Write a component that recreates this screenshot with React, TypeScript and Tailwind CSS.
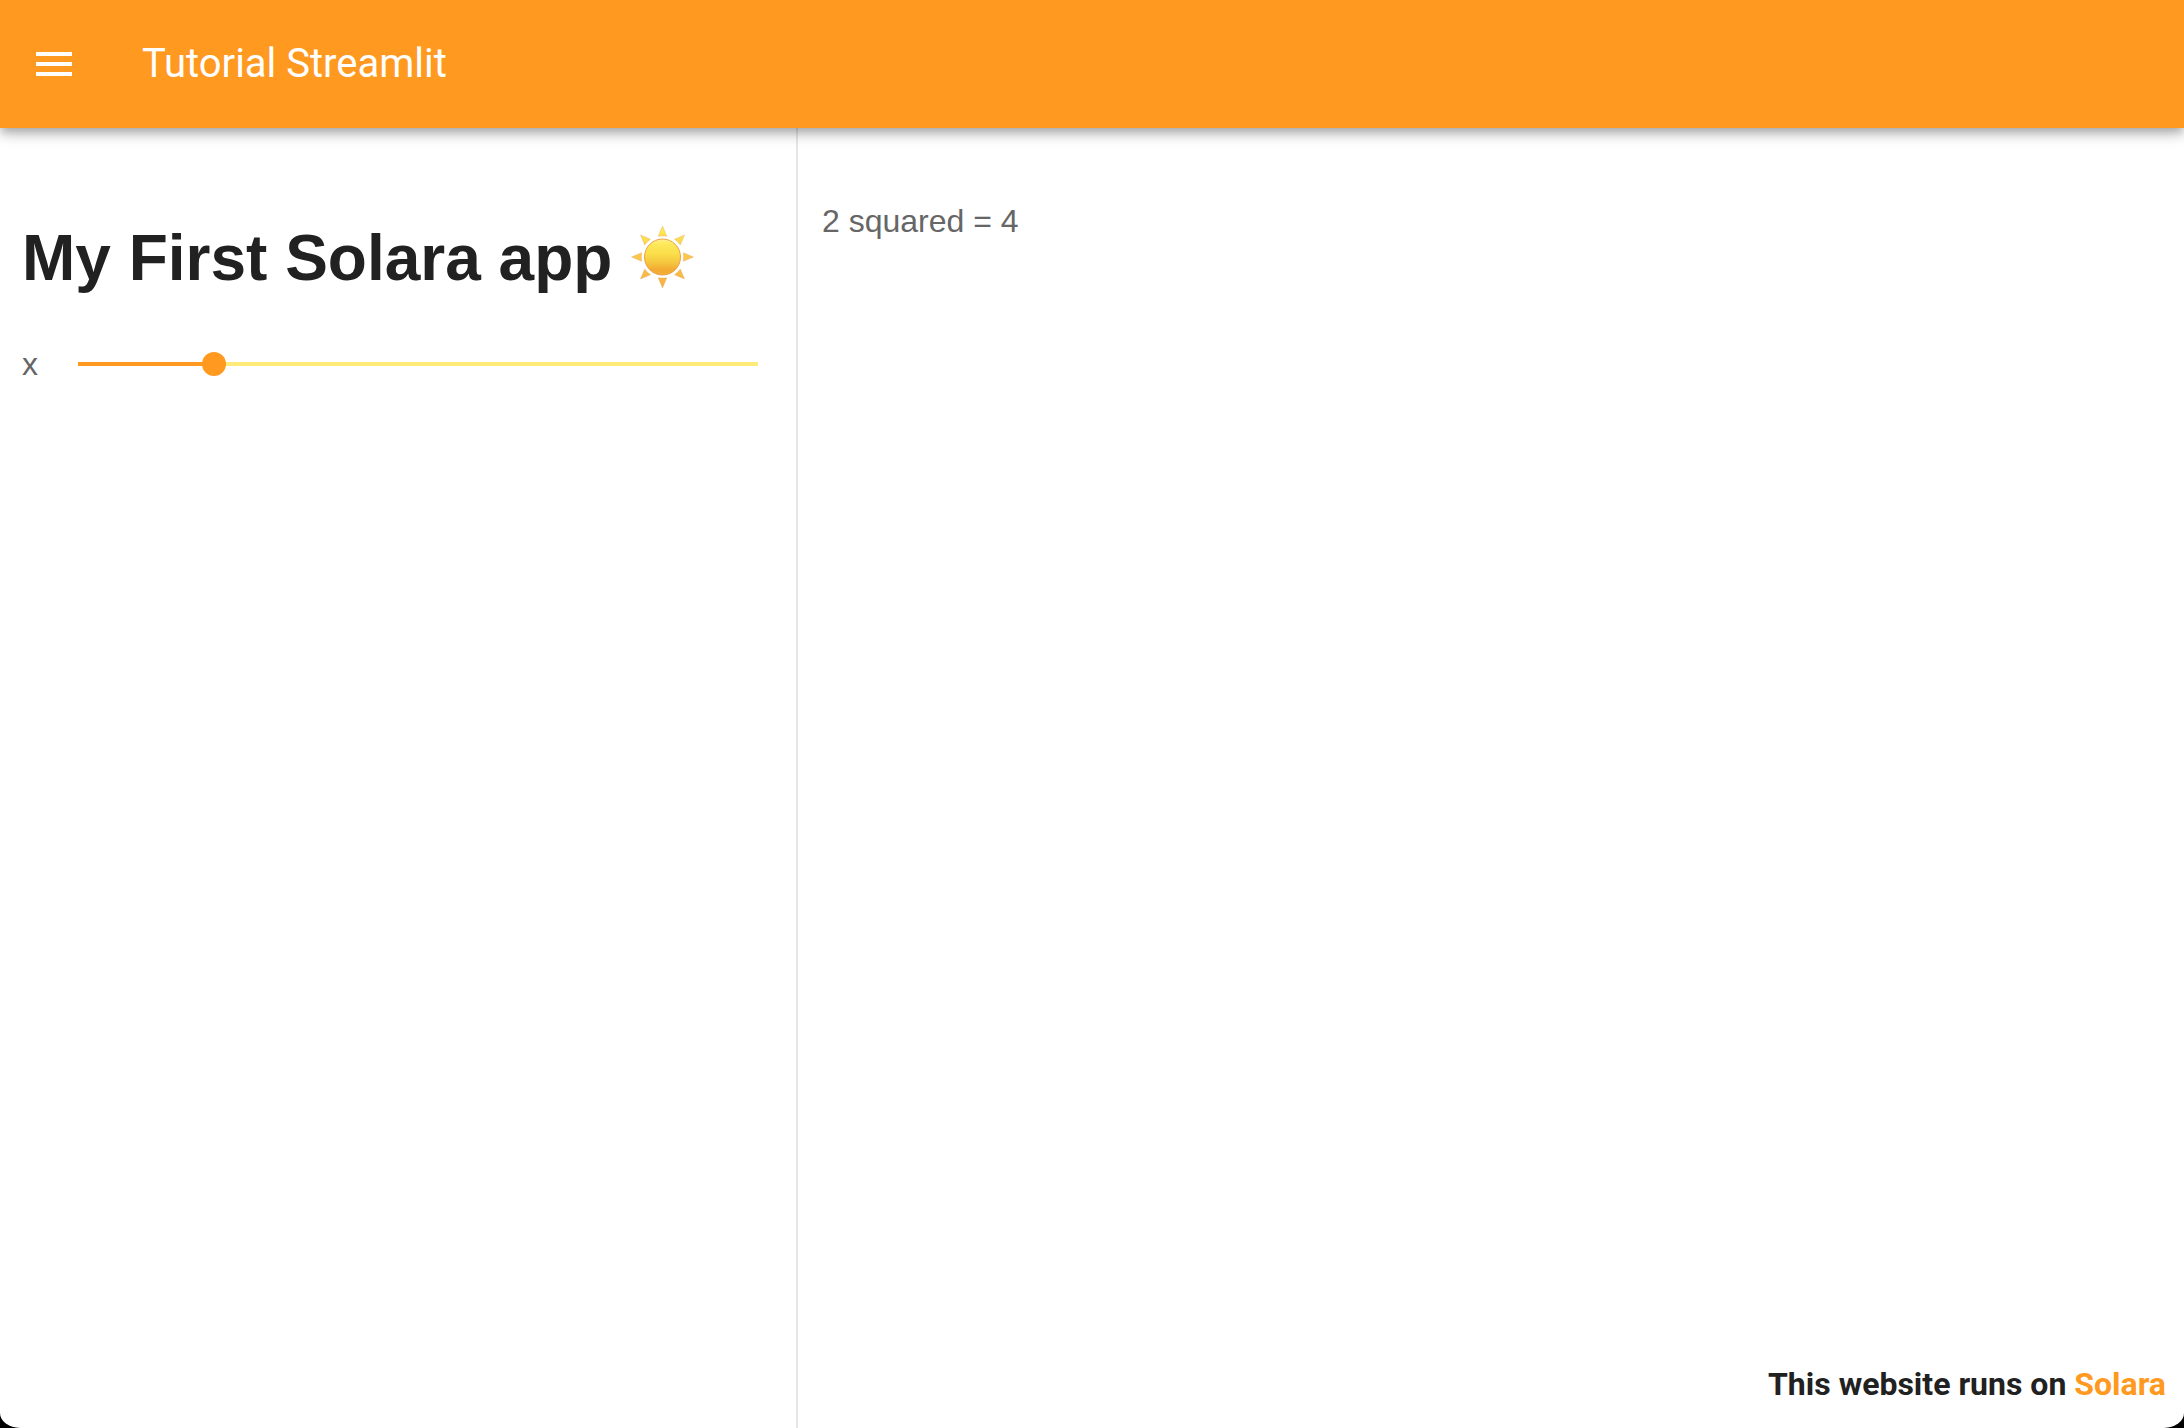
import { useState } from "react";
import type { CSSProperties } from "react";

function MenuIcon() {
  return (
    <svg viewBox="0 0 24 24" className="size-12" fill="currentColor" aria-hidden="true">
      <path d="M3,6H21V8H3V6M3,11H21V13H3V11M3,16H21V18H3V16Z" />
    </svg>
  );
}

function SunIcon() {
  return (
    <svg viewBox="-0.5 1 64 64" className="size-16 overflow-visible" role="img" aria-label="sun">
      <defs>
        <linearGradient id="disc" x1="0" y1="0" x2="0" y2="1">
          <stop offset="0" stopColor="#fff08c" />
          <stop offset="0.15" stopColor="#fde85a" />
          <stop offset="0.4" stopColor="#fbdf4b" />
          <stop offset="0.65" stopColor="#f5c73f" />
          <stop offset="0.85" stopColor="#f2aa31" />
          <stop offset="1" stopColor="#f4ae36" />
        </linearGradient>
        <linearGradient id="rays" gradientUnits="userSpaceOnUse" x1="0" y1="0" x2="0" y2="64">
          <stop offset="0" stopColor="#fff04e" />
          <stop offset="0.5" stopColor="#fbc748" />
          <stop offset="1" stopColor="#f9b03c" />
        </linearGradient>
      </defs>
      <g fill="url(#rays)" stroke="#e2a06a" strokeOpacity="0.6" strokeWidth="0.6" strokeLinejoin="round">
        <path d="M32 1L36.300 11.200Q32 10.600 27.700 11.200Z" />
        <path d="M32 63L36.300 52.800Q32 53.400 27.700 52.800Z" />
        <path d="M1 32L11.200 27.700Q10.600 32 11.200 36.300Z" />
        <path d="M63 32L52.800 27.700Q53.400 32 52.800 36.300Z" />
        <path d="M10 10L20 14.200Q16.600 16.600 14.200 20Z" />
        <path d="M54 10L44 14.200Q47.400 16.600 49.800 20Z" />
        <path d="M10 54L20 49.800Q16.600 47.400 14.200 44Z" />
        <path d="M54 54L44 49.800Q47.400 47.400 49.800 44Z" />
      </g>
      <circle cx="32" cy="32" r="18" fill="url(#disc)" stroke="#e9a348" strokeWidth="1" />
    </svg>
  );
}

export default function App() {
  const [x, setX] = useState(2);

  return (
    <div className="min-h-screen bg-black font-['Liberation_Sans',Arial,sans-serif]">
      <div className="flex min-h-screen flex-col overflow-hidden bg-white [border-radius:0_0_20px_20px/0_0_15px_15px]">
        <header className="relative z-10 flex h-32 shrink-0 items-center gap-16 bg-[#ff9920] px-[30px] text-white shadow-[0_4px_8px_-2px_rgba(0,0,0,0.2),0_8px_10px_0_rgba(0,0,0,0.14),0_2px_20px_0_rgba(0,0,0,0.12)]">
          <button type="button" aria-label="Open menu">
            <MenuIcon />
          </button>
          <div className="font-['Roboto',sans-serif] text-[40px] leading-[60px]">Tutorial Streamlit</div>
        </header>

        <div className="flex grow">
          <aside className="w-[36.54%] shrink-0 border-r-2 border-[#e6e6e6] pt-[90px] pl-[22px] pr-[26px]">
            <h1 className="flex items-center gap-[18px] text-[64px] leading-[80px] font-bold text-[#212121]">
              My First Solara app
              <SunIcon />
            </h1>
            <div className="mt-[42px] flex items-center gap-7">
              <label htmlFor="x" className="text-[32px] leading-12 text-[#666666]">
                x
              </label>
              <input
                id="x"
                type="range"
                min={0}
                max={10}
                value={x}
                onChange={(e) => setX(Number(e.target.value))}
                style={{ "--fill": `${x * 10}%` } as CSSProperties}
                className="h-6 min-w-0 grow cursor-pointer appearance-none bg-transparent [&::-webkit-slider-runnable-track]:h-6 [&::-webkit-slider-runnable-track]:bg-[linear-gradient(to_right,#ff9920_var(--fill),#ffeb78_var(--fill))] [&::-webkit-slider-runnable-track]:bg-[length:calc(100%-24px)_4px] [&::-webkit-slider-runnable-track]:bg-center [&::-webkit-slider-runnable-track]:bg-no-repeat [&::-webkit-slider-thumb]:size-6 [&::-webkit-slider-thumb]:appearance-none [&::-webkit-slider-thumb]:rounded-full [&::-webkit-slider-thumb]:bg-[#ff9920]"
              />
            </div>
          </aside>

          <main className="flex grow flex-col justify-between pt-[69px] pl-6">
            <p className="text-[32px] leading-12 text-[#666666]">
              {x} squared = {x * x}
            </p>
            <footer className="self-end pr-[18px] pb-5 font-['Roboto',sans-serif] text-[32px] leading-12 font-bold text-[#212121]">
              This website runs on{" "}
              <a href="#solara" className="text-[#ff9920]">
                Solara
              </a>
            </footer>
          </main>
        </div>
      </div>
    </div>
  );
}
